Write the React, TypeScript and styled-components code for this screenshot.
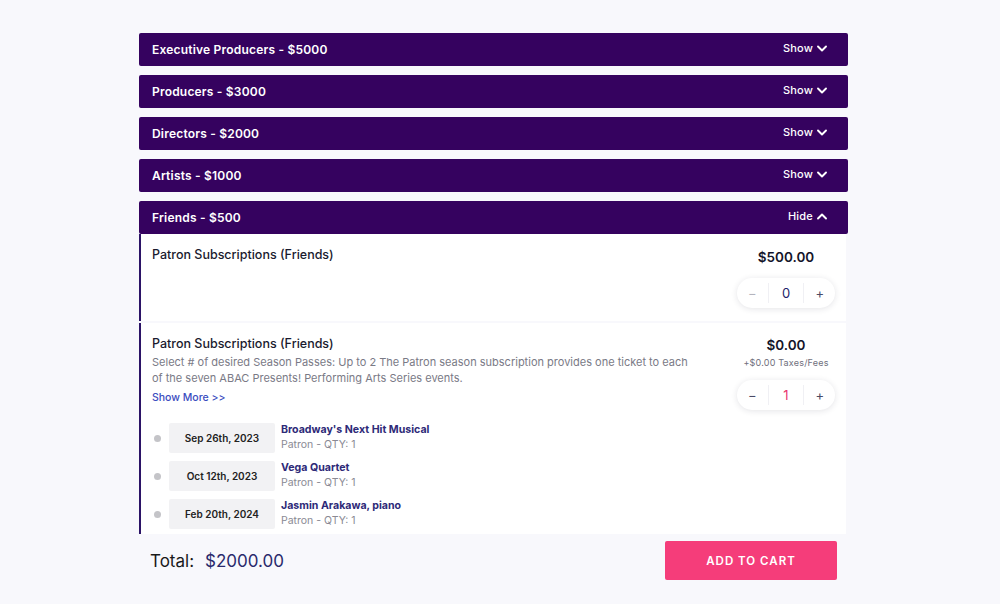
import React from "react";
import styled, { createGlobalStyle } from "styled-components";

const Global = createGlobalStyle`
  html, body { margin: 0; padding: 0; background: #f8f8fc; }
  body { font-family: "Inter", "Noto Sans", sans-serif; -webkit-font-smoothing: antialiased; }
  * { box-sizing: border-box; }
`;

const Page = styled.div`
  width: 1000px;
  height: 604px;
  background: #f8f8fc;
  display: flex;
  padding: 33px 0 0 139px;
  overflow: hidden;
`;

const Column = styled.div`
  width: 709px;
  display: flex;
  flex-direction: column;
`;

const Accordion = styled.div`
  display: flex;
  flex-direction: column;
  gap: 9px;
`;

const Header = styled.div`
  height: 33px;
  background: #35025f;
  border-radius: 2px;
  color: #fff;
  display: flex;
  align-items: center;
  justify-content: space-between;
  padding: 0 21px 0 13px;
  font-size: 12px;
  font-weight: 600;
  letter-spacing: 0.2px;
`;

const Toggle = styled.span`
  display: flex;
  align-items: center;
  gap: 4px;
  font-size: 11px;
  font-weight: 500;
  margin-top: -3px;
`;

const Panel = styled.div`
  height: 300px;
  margin-top: -9px;
  overflow: hidden;
  display: flex;
  flex-direction: column;
  gap: 2px;
  padding-right: 2px;
`;

const Item = styled.div<{ $h: number }>`
  background: #fff;
  border-left: 2px solid #2b1366;
  min-height: ${(p) => p.$h}px;
  display: flex;
  justify-content: space-between;
  padding: 12px 11px 0 11px;
  flex-shrink: 0;
`;

const Info = styled.div`
  display: flex;
  flex-direction: column;
  width: 548px;
`;

const Title = styled.div`
  font-size: 12.5px;
  font-weight: 500;
  color: #1a1a2e;
  line-height: 18px;
`;

const Desc = styled.div`
  font-size: 11px;
  color: #7a7a86;
  line-height: 16px;
  margin-top: 1px;
  width: 542px;
`;

const More = styled.div`
  font-size: 10.5px;
  color: #3b4cc0;
  font-weight: 500;
  margin-top: 5px;
`;

const Events = styled.div`
  display: flex;
  flex-direction: column;
  gap: 8px;
  margin-top: 19px;
`;

const Event = styled.div`
  display: flex;
  align-items: center;
  gap: 6px;
`;

const Dot = styled.span`
  width: 7px;
  height: 7px;
  border-radius: 50%;
  background: #c4c4c8;
  margin-left: 2px;
  margin-right: 2px;
`;

const DateBox = styled.div`
  width: 106px;
  height: 30px;
  background: #f2f2f4;
  border-radius: 2px;
  display: flex;
  align-items: center;
  justify-content: center;
  font-size: 10px;
  font-weight: 600;
  color: #222;
`;

const EvText = styled.div`
  display: flex;
  flex-direction: column;
  line-height: 15px;
  margin-top: -2px;
`;

const EvName = styled.div`
  font-size: 10.6px;
  font-weight: 700;
  color: #2e2a78;
`;

const EvSub = styled.div`
  font-size: 10.5px;
  color: #8a8a94;
`;

const Side = styled.div<{ $top: number }>`
  width: 100px;
  display: flex;
  flex-direction: column;
  align-items: center;
  padding-top: ${(p) => p.$top}px;
  margin-right: -1px;
`;

const Price = styled.div`
  font-size: 13.5px;
  font-weight: 600;
  color: #14142a;
`;

const Fees = styled.div`
  font-size: 9px;
  color: #6f6f7c;
  margin-top: 4px;
  letter-spacing: 0.2px;
`;

const Stepper = styled.div<{ $mt: number }>`
  width: 98px;
  height: 30px;
  border-radius: 15px;
  background: #fff;
  box-shadow: 0 1px 6px rgba(30, 30, 60, 0.12);
  display: grid;
  grid-template-columns: 1fr 1.2fr 1fr;
  align-items: center;
  margin-top: ${(p) => p.$mt}px;
`;

const StepBtn = styled.span<{ $dim?: boolean }>`
  text-align: center;
  font-size: 13px;
  color: ${(p) => (p.$dim ? "#b4b4be" : "#4a4a66")};
`;

const Count = styled.span<{ $pink?: boolean }>`
  text-align: center;
  font-size: 13px;
  color: ${(p) => (p.$pink ? "#e8316f" : "#23236a")};
  border-left: 1px solid #f0f0f4;
  border-right: 1px solid #f0f0f4;
  height: 20px;
  line-height: 20px;
`;

const Footer = styled.div`
  display: flex;
  align-items: center;
  justify-content: space-between;
  padding: 7px 11px 0 11px;
`;

const Total = styled.div`
  font-size: 17px;
  color: #1a1a1a;
  display: flex;
  gap: 11px;
`;

const TotalVal = styled.span`
  color: #2a2a6c;
`;

const CartBtn = styled.button`
  width: 172px;
  height: 39px;
  border: none;
  border-radius: 2px;
  background: #f53d7a;
  color: #fff;
  font-family: inherit;
  font-size: 11.5px;
  font-weight: 600;
  letter-spacing: 1px;
`;

const Chevron = ({ up }: { up?: boolean }) => (
  <svg width="10" height="7" viewBox="0 0 10 7" fill="none">
    <path
      d={up ? "M1 5.5 L5 1.5 L9 5.5" : "M1 1.5 L5 5.5 L9 1.5"}
      stroke="#fff"
      strokeWidth="1.9"
      strokeLinecap="round"
      strokeLinejoin="round"
    />
  </svg>
);

const tiers = [
  "Executive Producers - $5000",
  "Producers - $3000",
  "Directors - $2000",
  "Artists - $1000",
];

const events = [
  { date: "Sep 26th, 2023", name: "Broadway's Next Hit Musical" },
  { date: "Oct 12th, 2023", name: "Vega Quartet" },
  { date: "Feb 20th, 2024", name: "Jasmin Arakawa, piano" },
];

export default function App() {
  return (
    <>
      <Global />
      <Page>
        <Column>
          <Accordion>
            {tiers.map((t) => (
              <Header key={t}>
                <span>{t}</span>
                <Toggle>
                  Show <Chevron />
                </Toggle>
              </Header>
            ))}
            <Header>
              <span>Friends - $500</span>
              <Toggle>
                Hide <Chevron up />
              </Toggle>
            </Header>
            <Panel>
              <Item $h={87}>
                <Info>
                  <Title>Patron Subscriptions (Friends)</Title>
                </Info>
                <Side $top={3}>
                  <Price>$500.00</Price>
                  <Stepper $mt={13}>
                    <StepBtn $dim>−</StepBtn>
                    <Count>0</Count>
                    <StepBtn>+</StepBtn>
                  </Stepper>
                </Side>
              </Item>
              <Item $h={240}>
                <Info>
                  <Title>Patron Subscriptions (Friends)</Title>
                  <Desc>
                    Select # of desired Season Passes: Up to 2 The Patron season subscription provides one ticket to each
                    of the seven ABAC Presents! Performing Arts Series events.
                  </Desc>
                  <More>Show More &gt;&gt;</More>
                  <Events>
                    {events.map((e) => (
                      <Event key={e.date}>
                        <Dot />
                        <DateBox>{e.date}</DateBox>
                        <EvText>
                          <EvName>{e.name}</EvName>
                          <EvSub>Patron - QTY: 1</EvSub>
                        </EvText>
                      </Event>
                    ))}
                  </Events>
                </Info>
                <Side $top={2}>
                  <Price>$0.00</Price>
                  <Fees>+$0.00 Taxes/Fees</Fees>
                  <Stepper $mt={12}>
                    <StepBtn>−</StepBtn>
                    <Count $pink>1</Count>
                    <StepBtn>+</StepBtn>
                  </Stepper>
                </Side>
              </Item>
            </Panel>
          </Accordion>
          <Footer>
            <Total>
              <span>Total:</span>
              <TotalVal>$2000.00</TotalVal>
            </Total>
            <CartBtn>ADD TO CART</CartBtn>
          </Footer>
        </Column>
      </Page>
    </>
  );
}
